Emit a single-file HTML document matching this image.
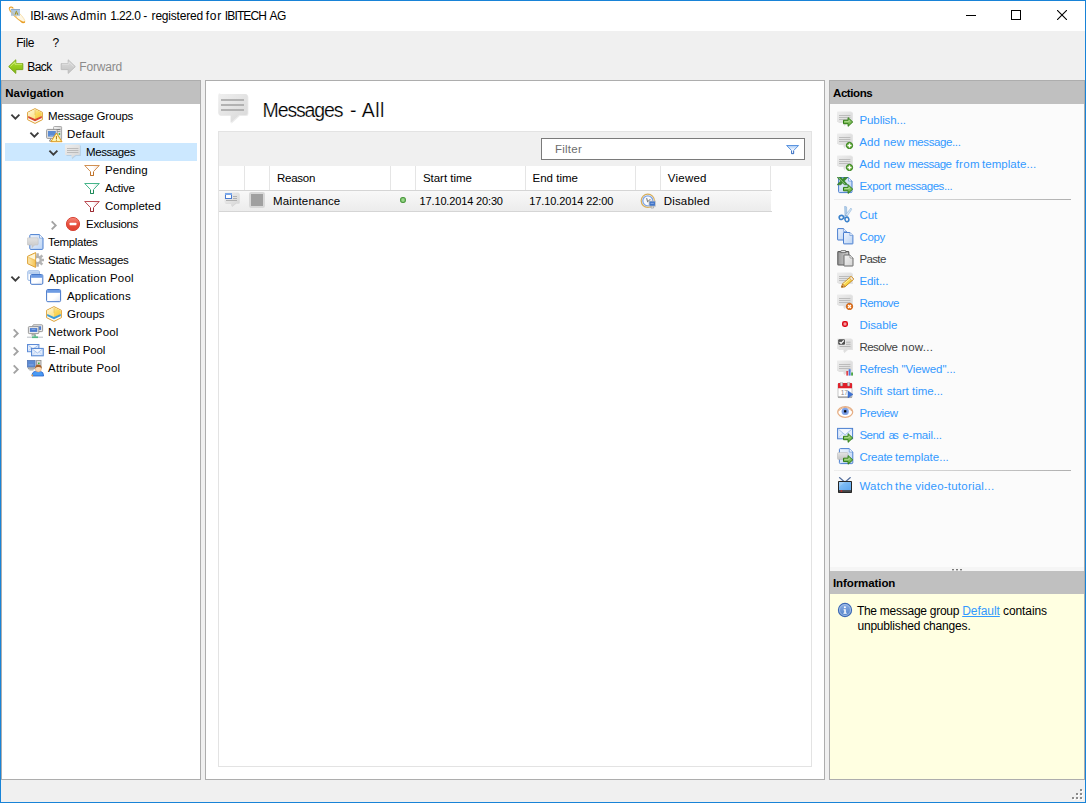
<!DOCTYPE html>
<html lang="en"><head><meta charset="utf-8"><title>IBI-aws Admin 1.22.0 - registered for IBITECH AG</title>
<style>
html,body{margin:0;padding:0}
body{width:1086px;height:803px;position:relative;overflow:hidden;background:#f0f0f0;font:11.5px/14px "Liberation Sans",sans-serif;color:#000}
div,svg,.g{position:absolute;box-sizing:border-box}
.g{left:0;top:0;width:0;height:0;display:block}
.t{white-space:pre;line-height:14px}
.ul{text-decoration:underline}
.big{-webkit-text-stroke:.22px #fff}
.win{left:0;top:0;width:1086px;height:803px;border:1px solid #1883d7}
.title{left:1px;top:1px;width:1084px;height:30px;background:#fff}
.panel{border:1px solid #adadad;background:#fff}
.hdr{background:#c0c0c0}
.sep{height:1px;background:linear-gradient(to right,#eeeeee,#b0b0b0)}
.vs{width:1px;background:#e5e5e5;top:166px;height:24px}
.i16{width:16px;height:16px}
</style></head>
<body>
<header class="g" id="titlebar">
<div class="title" style="left:1px;top:1px"></div>
<svg style="left:6px;top:5px" width="22" height="22" viewBox="0 0 22 22"><g transform="translate(11.1,9.8) rotate(43.5)"><ellipse rx="10.4" ry="2.7" fill="#fff7e4" stroke="#f6dca4" stroke-width=".8"/><path d="M-10.4,0 A10.4,2.7 0 0 0 10.4,0" fill="none" stroke="#ecae44" stroke-width="1"/><path d="M-10.3,.4 Q-10.6,-2.2 -7.4,-2.1 M10.3,-.4 Q10.6,2.4 7,2.2" fill="none" stroke="#e89c24" stroke-width="1.1"/></g><rect x="5" y="4" width="9" height="6.8" fill="#a8c2de" opacity=".9"/><rect x="5" y="4" width="9" height="1" fill="#86a4c8" opacity=".9"/><path d="M8.6,9.4 L10.2,5.6 L12.4,9.6 L11.2,9.8 L10.2,8 L9.6,9.8 Z" fill="#9c8a18"/><path d="M9.8,8.2 L10.2,7.2 L10.8,8.2 Z" fill="#f8f4d0"/><path d="M5.4,6.6 L10.6,11.8" stroke="#f0c060" stroke-width=".9" stroke-dasharray="1 .6" opacity=".95"/></svg>
<svg style="left:966px;top:15px" width="10" height="1" viewBox="0 0 10 1"><rect width="10" height="1" fill="#000"/></svg>
<svg style="left:1011px;top:10px" width="10" height="10" viewBox="0 0 10 10"><rect x=".5" y=".5" width="9" height="9" fill="none" stroke="#000" stroke-width="1"/></svg>
<svg style="left:1057px;top:10px" width="10" height="10" viewBox="0 0 10 10"><path d="M0,0 L10,10 M10,0 L0,10" stroke="#000" stroke-width="1.1"/></svg>
<div class="t" style="left:30.2px;top:9px;letter-spacing:-0.33px;font-size:12px;">IBI-aws</div>
<div class="t" style="left:70.8px;top:9px;letter-spacing:0.42px;font-size:12px;">Admin</div>
<div class="t" style="left:110.2px;top:9px;letter-spacing:-0.55px;font-size:12px;">1.22.0</div>
<div class="t" style="left:143.3px;top:9px;letter-spacing:0.86px;font-size:12px;">-</div>
<div class="t" style="left:151.6px;top:9px;letter-spacing:-0.21px;font-size:12px;">registered</div>
<div class="t" style="left:205.8px;top:9px;letter-spacing:0.71px;font-size:12px;">for</div>
<div class="t" style="left:224.8px;top:9px;letter-spacing:-0.86px;font-size:12px;">IBITECH</div>
<div class="t" style="left:269.4px;top:9px;letter-spacing:-0.46px;font-size:12px;">AG</div>
</header>
<nav class="g" id="menubar">
<div class="t" style="left:16.2px;top:36px;letter-spacing:-0.40px;font-size:12px;">File</div>
<div class="t" style="left:52.5px;top:36px;letter-spacing:-2.72px;font-size:12px;">?</div>
</nav>
<div class="g" id="toolbar">
<svg style="left:8px;top:59px" width="16" height="16" viewBox="0 0 16 16"><defs><linearGradient id="back-gbk" x1="0" y1="0" x2="0" y2="1"><stop offset="0" stop-color="#b3df3c"/><stop offset=".5" stop-color="#96cc1e"/><stop offset="1" stop-color="#7fb512"/></linearGradient></defs><path d="M.7,7.6 L7.8,.8 V4.6 H14.8 V10.6 H7.8 V14.4 Z" fill="url(#back-gbk)" stroke="#7aa81a" stroke-width="1" stroke-linejoin="round"/><path d="M2.4,7.4 L7,2.9 V5.2 H14" fill="none" stroke="#d4f07a" stroke-width="1" opacity=".9"/></svg>
<svg style="left:60px;top:59px" width="16" height="16" viewBox="0 0 16 16"><defs><linearGradient id="fwd-gfw" x1="0" y1="0" x2="0" y2="1"><stop offset="0" stop-color="#dcdcdc"/><stop offset="1" stop-color="#c2c2c2"/></linearGradient></defs><path d="M15.3,7.6 L8.2,.8 V4.6 H1.2 V10.6 H8.2 V14.4 Z" fill="url(#fwd-gfw)" stroke="#bdbdbd" stroke-width="1" stroke-linejoin="round"/><path d="M2,5.2 H9 V2.9 L13.6,7.4" fill="none" stroke="#e2e2e2" stroke-width="1" opacity=".9"/></svg>
<div class="t" style="left:27.2px;top:60px;letter-spacing:-0.54px;font-size:12px;">Back</div>
<div class="t" style="left:79.3px;top:60px;letter-spacing:-0.18px;font-size:12px;color:#8b8b8b;">Forward</div>
</div>
<nav class="g" id="navigation">
<div class="panel" style="left:1px;top:80px;width:200px;height:700px"></div>
<div class="hdr" style="left:2px;top:81px;width:198px;height:23px"></div>
<div style="left:5px;top:143px;width:192px;height:18px;background:#cce8ff"></div>
<svg style="left:27px;top:108px" width="16" height="16" viewBox="0 0 16 16"><defs><linearGradient id="boxred-gy" x1="0" y1="0" x2="1" y2="1"><stop offset="0" stop-color="#fdf3cf"/><stop offset=".55" stop-color="#f9d95e"/><stop offset="1" stop-color="#f4c238"/></linearGradient></defs><path d="M8,.6 L15.4,4.3 V11.7 L8,15.4 L.6,11.7 V4.3 Z" fill="#fffaf0" stroke="#dca23a" stroke-width="1" stroke-linejoin="round"/><path d="M8,1.3 L14.8,4.7 V8.2 L8,11.4 L1.2,8.2 V4.7 Z" fill="url(#boxred-gy)"/><path d="M8,1.3 L1.2,4.7 V8.2 L8,11.4 Z" fill="#fff" opacity=".35"/><path d="M1.2,7.9 L8,11 L14.8,7.9 V10.1 L8,13.2 L1.2,10.1 Z" fill="#d8452f"/><path d="M8,1.5 V7" stroke="#e7b552" stroke-width=".7" opacity=".8"/></svg>
<svg style="left:10px;top:113px" width="11" height="8" viewBox="0 0 11 8"><path d="M1.4,1.7 L5.4,5.6 L9.4,1.7" fill="none" stroke="#3c3c3c" stroke-width="1.85"/></svg>
<svg style="left:46px;top:126px" width="17" height="17" viewBox="0 0 17 17"><defs><linearGradient id="default-gt" x1="0" y1="0" x2="1" y2="0"><stop offset="0" stop-color="#fafafa"/><stop offset="1" stop-color="#d2d2d2"/></linearGradient></defs><rect x="7.6" y=".5" width="8" height="13.4" rx=".8" fill="url(#default-gt)" stroke="#a2a2a2" stroke-width=".9"/><rect x="10" y="3" width="4.4" height=".9" fill="#777"/><rect x="10" y="5" width="4.4" height=".9" fill="#999"/><circle cx="13.4" cy="8" r=".9" fill="#3cae3c"/><rect x=".6" y="3.4" width="10.6" height="9" rx=".9" fill="#e4e4e4" stroke="#8e8e8e" stroke-width=".9"/><rect x="2" y="5" width="7.8" height="5.6" fill="#5b8bd2"/><rect x="3.8" y="9" width="3.6" height=".7" fill="#86aee6"/><path d="M4.5,12.6 v1.6 h-1 v1 h4" fill="none" stroke="#8e8e8e" stroke-width=".9"/><path d="M10.4,7 L16,15.7 H4.8 Z" fill="#fdec7c" stroke="#dc9a28" stroke-width="1" stroke-linejoin="round"/><path d="M10.4,8.6 L14.2,14.7 H6.6 Z" fill="#fffbd8" opacity=".75"/><rect x="9.9" y="10" width="1.1" height="3" fill="#b8801c"/><rect x="9.9" y="13.6" width="1.1" height="1.1" fill="#b8801c"/></svg>
<svg style="left:29px;top:131px" width="11" height="8" viewBox="0 0 11 8"><path d="M1.4,1.7 L5.4,5.6 L9.4,1.7" fill="none" stroke="#3c3c3c" stroke-width="1.85"/></svg>
<svg style="left:65px;top:144px" width="16" height="16" viewBox="0 0 16 16"><defs><linearGradient id="msgs-gb" x1="0" y1="0" x2="1" y2="1"><stop offset="0" stop-color="#eeeeee"/><stop offset="1" stop-color="#d6d6d6"/></linearGradient></defs><g opacity="1"><path d="M1.5,1.5 h14.4 v10.5 h-4.9 l-4,3.2 v-3.2 h-5.5 z" fill="#000" opacity=".10"/><path d="M1.7,0.5 h12.0 a1.2,1.2 0 0 1 1.2,1.2 v8.1 a1.2,1.2 0 0 1 -1.2,1.2 h-3.200000000000001 l-4,3 v-3 h-5.6 a1.2,1.2 0 0 1 -1.2,-1.2 v-8.1 a1.2,1.2 0 0 1 1.2,-1.2 z" fill="url(#msgs-gb)"/><rect x="2.0" y="4.0" width="11.4" height="1" fill="#bcbcbc"/><rect x="2.0" y="6.0" width="11.4" height="1" fill="#bcbcbc"/><rect x="2.0" y="8.0" width="11.4" height="1" fill="#bcbcbc"/></g></svg>
<svg style="left:48px;top:149px" width="11" height="8" viewBox="0 0 11 8"><path d="M1.4,1.7 L5.4,5.6 L9.4,1.7" fill="none" stroke="#3c3c3c" stroke-width="1.85"/></svg>
<svg style="left:84px;top:162px" width="16" height="16" viewBox="0 0 16 16"><defs><linearGradient id="fpending-gf" x1="0" y1="0" x2="1" y2="0"><stop offset="0" stop-color="#fff"/><stop offset=".55" stop-color="#fff"/><stop offset="1" stop-color="#f1ddd4"/></linearGradient></defs><path d="M.7,3.5 H15.3 L9.5,9.6 V13.5 H6.5 V9.6 Z" fill="url(#fpending-gf)" stroke="#cf8a4a" stroke-width=".95" stroke-linejoin="miter"/><path d="M6.5,10 V13.5 H9.5 V10" fill="none" stroke="#bf7228" stroke-width=".95"/></svg>
<svg style="left:84px;top:180px" width="16" height="16" viewBox="0 0 16 16"><defs><linearGradient id="factive-gf" x1="0" y1="0" x2="1" y2="0"><stop offset="0" stop-color="#fff"/><stop offset=".55" stop-color="#fff"/><stop offset="1" stop-color="#cfe9dc"/></linearGradient></defs><path d="M.7,3.5 H15.3 L9.5,9.6 V13.5 H6.5 V9.6 Z" fill="url(#factive-gf)" stroke="#3cb184" stroke-width=".95" stroke-linejoin="miter"/><path d="M6.5,10 V13.5 H9.5 V10" fill="none" stroke="#1f8756" stroke-width=".95"/></svg>
<svg style="left:84px;top:198px" width="16" height="16" viewBox="0 0 16 16"><defs><linearGradient id="fdone-gf" x1="0" y1="0" x2="1" y2="0"><stop offset="0" stop-color="#fff"/><stop offset=".55" stop-color="#fff"/><stop offset="1" stop-color="#ecd0d2"/></linearGradient></defs><path d="M.7,3.5 H15.3 L9.5,9.6 V13.5 H6.5 V9.6 Z" fill="url(#fdone-gf)" stroke="#b8444c" stroke-width=".95" stroke-linejoin="miter"/><path d="M6.5,10 V13.5 H9.5 V10" fill="none" stroke="#982830" stroke-width=".95"/></svg>
<svg style="left:65px;top:216px" width="16" height="16" viewBox="0 0 16 16"><defs><linearGradient id="excl-gr" x1="0" y1="0" x2="0" y2="1"><stop offset="0" stop-color="#f58a7c"/><stop offset=".5" stop-color="#e9503e"/><stop offset="1" stop-color="#e0402e"/></linearGradient></defs><circle cx="8" cy="8" r="6.6" fill="url(#excl-gr)" stroke="#d8483a" stroke-width="1"/><rect x="4.6" y="6.8" width="6.8" height="2.5" rx=".5" fill="#fff"/></svg>
<svg style="left:50px;top:220px" width="8" height="11" viewBox="0 0 8 11"><path d="M1.7,1.4 L5.7,5.4 L1.7,9.4" fill="none" stroke="#a3a3a3" stroke-width="1.9"/></svg>
<svg style="left:27px;top:234px" width="17" height="16" viewBox="0 0 17 16"><defs><linearGradient id="templates-gp" x1="0" y1="0" x2="1" y2="1"><stop offset="0" stop-color="#eef4fd"/><stop offset="1" stop-color="#bcd4f4"/></linearGradient><linearGradient id="templates-gg" x1="0" y1="0" x2="0" y2="1"><stop offset="0" stop-color="#e2e2e2"/><stop offset="1" stop-color="#c6c6c6"/></linearGradient></defs><path d="M3.8,0.6 H12.5 L16.0,4.1 V14.4 a1,1 0 0 1 -1,1 H3.8 a1,1 0 0 1 -1,-1 V1.6 a1,1 0 0 1 1,-1 z" fill="url(#templates-gp)" stroke="#4a7fd0" stroke-width="1" stroke-linejoin="round"/><path d="M12.5,0.6 V4.1 H16.0" fill="#fff" stroke="#4a7fd0" stroke-width=".7" opacity=".8"/><path d="M1.2,3.8 h9 a1,1 0 0 1 1,1 v5.2 a1,1 0 0 1 -1,1 h-2.6 l-2.6,2.7 v-2.7 h-3.8 a1,1 0 0 1 -1,-1 v-5.2 a1,1 0 0 1 1,-1 z" fill="url(#templates-gg)" stroke="#bdbdbd" stroke-width=".5"/></svg>
<svg style="left:27px;top:252px" width="17" height="16" viewBox="0 0 17 16"><defs><linearGradient id="static-gy2" x1="0" y1="0" x2="1" y2="0"><stop offset="0" stop-color="#fde9b0"/><stop offset="1" stop-color="#f5c350"/></linearGradient></defs><g transform="translate(10.6,8)" fill="#b3b3b3"><circle r="4.4"/><rect x="-1.25" y="-6.7" width="2.5" height="3" transform="rotate(0)"/><rect x="-1.25" y="-6.7" width="2.5" height="3" transform="rotate(45)"/><rect x="-1.25" y="-6.7" width="2.5" height="3" transform="rotate(90)"/><rect x="-1.25" y="-6.7" width="2.5" height="3" transform="rotate(135)"/><rect x="-1.25" y="-6.7" width="2.5" height="3" transform="rotate(180)"/><rect x="-1.25" y="-6.7" width="2.5" height="3" transform="rotate(225)"/><rect x="-1.25" y="-6.7" width="2.5" height="3" transform="rotate(270)"/><rect x="-1.25" y="-6.7" width="2.5" height="3" transform="rotate(315)"/><circle r="2" fill="#fbfbfb"/></g><path d="M8.6,.6 L.6,4.3 V11.7 L8.6,15.4 Z" fill="url(#static-gy2)" stroke="#dca23a" stroke-width="1" stroke-linejoin="round"/><path d="M8.2,1.5 L1.4,4.7 L8.2,7.8 Z" fill="#fff6d8"/><path d="M1.4,5.4 L8.2,8.6" stroke="#e9b95c" stroke-width=".6"/></svg>
<svg style="left:27px;top:270px" width="17" height="16" viewBox="0 0 17 16"><defs><linearGradient id="apppool-gw" x1="0" y1="0" x2="1" y2="1"><stop offset="0" stop-color="#fff"/><stop offset=".6" stop-color="#fff"/><stop offset="1" stop-color="#dfe6f4"/></linearGradient></defs><g opacity="1"><rect x="0.8" y="0.8" width="11.6" height="9.6" rx="1.2" fill="url(#apppool-gw)" stroke="#94b5e4" stroke-width="1"/><rect x="1.3" y="1.3" width="10.6" height="2.8" fill="#b7cfef"/></g><g opacity="1"><rect x="3.6" y="4.5" width="12.2" height="9.8" rx="1.2" fill="url(#apppool-gw)" stroke="#4577c9" stroke-width="1"/><rect x="4.1" y="5.0" width="11.2" height="2.8" fill="#6d9be3"/></g></svg>
<svg style="left:10px;top:275px" width="11" height="8" viewBox="0 0 11 8"><path d="M1.4,1.7 L5.4,5.6 L9.4,1.7" fill="none" stroke="#3c3c3c" stroke-width="1.85"/></svg>
<svg style="left:46px;top:288px" width="16" height="16" viewBox="0 0 16 16"><defs><linearGradient id="apps-gw" x1="0" y1="0" x2="1" y2="1"><stop offset="0" stop-color="#fff"/><stop offset=".6" stop-color="#fff"/><stop offset="1" stop-color="#dfe6f4"/></linearGradient></defs><g opacity="1"><rect x="0.6" y="1.5" width="14" height="12.2" rx="1.2" fill="url(#apps-gw)" stroke="#4577c9" stroke-width="1"/><rect x="1.1" y="2.0" width="13" height="2.8" fill="#6d9be3"/></g></svg>
<svg style="left:46px;top:306px" width="16" height="16" viewBox="0 0 16 16"><defs><linearGradient id="boxblue-gy" x1="0" y1="0" x2="1" y2="1"><stop offset="0" stop-color="#fdf3cf"/><stop offset=".55" stop-color="#f9d95e"/><stop offset="1" stop-color="#f4c238"/></linearGradient></defs><path d="M8,.6 L15.4,4.3 V11.7 L8,15.4 L.6,11.7 V4.3 Z" fill="#fffaf0" stroke="#dca23a" stroke-width="1" stroke-linejoin="round"/><path d="M8,1.3 L14.8,4.7 V8.2 L8,11.4 L1.2,8.2 V4.7 Z" fill="url(#boxblue-gy)"/><path d="M8,1.3 L1.2,4.7 V8.2 L8,11.4 Z" fill="#fff" opacity=".35"/><path d="M1.2,7.9 L8,11 L14.8,7.9 V10.1 L8,13.2 L1.2,10.1 Z" fill="#3b9bd6"/><path d="M8,1.5 V7" stroke="#e7b552" stroke-width=".7" opacity=".8"/></svg>
<svg style="left:27px;top:324px" width="17" height="16" viewBox="0 0 17 16"><rect x="5.8" y="0.8" width="9.8" height="6.8" rx=".8" fill="#ececec" stroke="#8f8f8f" stroke-width=".9"/><rect x="7.3" y="2.3" width="6.800000000000001" height="3.5999999999999996" fill="#4b7bd0"/><rect x="1.4" y="2.6" width="10.4" height="7" rx=".8" fill="#ececec" stroke="#8f8f8f" stroke-width=".9"/><rect x="2.9" y="4.1" width="7.4" height="3.8" fill="#4b7bd0"/><rect x="4.6" y="4.9" width="4" height="1" fill="#86aae6"/><path d="M5.6,9.8 l-1,1.4 h4 l-1,-1.4" fill="#b8b8b8" stroke="#8f8f8f" stroke-width=".6"/><rect x="0" y="12.6" width="16" height="1.3" fill="#c9ced3"/><rect x="5" y="12.4" width="6" height="1.7" fill="#57b884"/><rect x="7.4" y="10.8" width="1.3" height="2" fill="#57b884"/></svg>
<svg style="left:12px;top:328px" width="8" height="11" viewBox="0 0 8 11"><path d="M1.7,1.4 L5.7,5.4 L1.7,9.4" fill="none" stroke="#a3a3a3" stroke-width="1.9"/></svg>
<svg style="left:27px;top:342px" width="17" height="16" viewBox="0 0 17 16"><g opacity="1"><rect x="0.5" y="2.5" width="11.4" height="7.2" fill="#e3edfc" stroke="#5d8bd6" stroke-width="1"/><path d="M1.3,3.3 L6.2,6.964 L11.1,3.3" fill="#f4f8ff" stroke="#9fbdea" stroke-width=".9"/><path d="M1.3,8.899999999999999 L4.604,5.74 M11.1,8.899999999999999 L7.796,5.74" stroke="#b7cdf0" stroke-width=".8"/></g><g opacity="1"><rect x="4.6" y="6.4" width="11.6" height="7.4" fill="#e3edfc" stroke="#4a7fd0" stroke-width="1"/><path d="M5.3999999999999995,7.2 L10.399999999999999,10.988 L15.399999999999999,7.2" fill="#f4f8ff" stroke="#9fbdea" stroke-width=".9"/><path d="M5.3999999999999995,13.0 L8.776,9.73 M15.399999999999999,13.0 L12.024,9.73" stroke="#b7cdf0" stroke-width=".8"/></g></svg>
<svg style="left:12px;top:346px" width="8" height="11" viewBox="0 0 8 11"><path d="M1.7,1.4 L5.7,5.4 L1.7,9.4" fill="none" stroke="#a3a3a3" stroke-width="1.9"/></svg>
<svg style="left:27px;top:360px" width="17" height="17" viewBox="0 0 17 17"><rect x="9.6" y=".4" width="4.4" height="8" fill="#d8d8d8" stroke="#8a8a8a" stroke-width=".8"/><rect x="11" y="2.6" width="1.6" height="1.4" fill="#3cae3c"/><rect x=".5" y=".5" width="7.6" height="6.6" fill="#5c8ad3" stroke="#5476b4" stroke-width=".8"/><rect x="1.6" y="4.5" width="5" height=".8" fill="#8cb0ea"/><path d="M1.4,7.8 h6 v1.2 h-6 z M2.4,10 h4" fill="#cfcfcf" stroke="#8a8a8a" stroke-width=".7"/><path d="M5,16 q0,-4.4 3.6,-4.6 h5 q3,.4 3,4.6 z" fill="#4a9af4" stroke="#2a62c8" stroke-width=".8"/><rect x="4.6" y="14.6" width="1.4" height="1.6" fill="#f0a040"/><circle cx="11.3" cy="8.8" r="3.1" fill="#fbd9b5" stroke="#d8a06c" stroke-width=".5"/><path d="M8,8.4 q.2,-4 3.4,-4 q3.2,0 3.4,4 q-1.6,-1.6 -3.4,-1.4 q-1.8,-.2 -3.4,1.4 z" fill="#a5602a"/></svg>
<svg style="left:12px;top:364px" width="8" height="11" viewBox="0 0 8 11"><path d="M1.7,1.4 L5.7,5.4 L1.7,9.4" fill="none" stroke="#a3a3a3" stroke-width="1.9"/></svg>
<div class="t" style="left:5.3px;top:86px;letter-spacing:-0.04px;font-weight:bold;">Navigation</div>
<div class="t" style="left:48.0px;top:109px;letter-spacing:-0.17px;">Message Groups</div>
<div class="t" style="left:67.0px;top:127px;letter-spacing:0.16px;">Default</div>
<div class="t" style="left:86.0px;top:145px;letter-spacing:-0.41px;">Messages</div>
<div class="t" style="left:105.0px;top:163px;letter-spacing:0.07px;">Pending</div>
<div class="t" style="left:105.0px;top:181px;letter-spacing:-0.29px;">Active</div>
<div class="t" style="left:105.0px;top:199px;letter-spacing:0.03px;">Completed</div>
<div class="t" style="left:86.0px;top:217px;letter-spacing:-0.29px;">Exclusions</div>
<div class="t" style="left:48.0px;top:235px;letter-spacing:-0.32px;">Templates</div>
<div class="t" style="left:48.0px;top:253px;letter-spacing:-0.25px;">Static Messages</div>
<div class="t" style="left:48.0px;top:271px;letter-spacing:0.21px;">Application Pool</div>
<div class="t" style="left:67.0px;top:289px;letter-spacing:0.15px;">Applications</div>
<div class="t" style="left:67.0px;top:307px;letter-spacing:-0.02px;">Groups</div>
<div class="t" style="left:48.0px;top:325px;letter-spacing:0.18px;">Network Pool</div>
<div class="t" style="left:48.0px;top:343px;letter-spacing:-0.14px;">E-mail Pool</div>
<div class="t" style="left:48.0px;top:361px;letter-spacing:0.24px;">Attribute Pool</div>
</nav>
<main class="g" id="content">
<div class="panel" style="left:205px;top:80px;width:620px;height:700px"></div>
<div style="left:218px;top:131px;width:594px;height:636px;border:1px solid #e3e3e3;background:#fff"></div>
<div style="left:219px;top:132px;width:592px;height:34px;background:#f0f0f0"></div>
<div style="left:541px;top:138px;width:264px;height:22px;border:1px solid #7a7a7a;background:#fff"></div>
<div class="vs" style="left:244px;top:166px"></div>
<div class="vs" style="left:269px;top:166px"></div>
<div class="vs" style="left:390px;top:166px"></div>
<div class="vs" style="left:415px;top:166px"></div>
<div class="vs" style="left:525px;top:166px"></div>
<div class="vs" style="left:635px;top:166px"></div>
<div class="vs" style="left:660px;top:166px"></div>
<div class="vs" style="left:770px;top:166px"></div>
<div style="left:219px;top:190px;width:553px;height:1px;background:#d5d5d5"></div>
<div style="left:219px;top:191px;width:552px;height:20px;background:linear-gradient(#f8f8f8,#ececec)"></div>
<div style="left:219px;top:211px;width:553px;height:1px;background:#d5d5d5"></div>
<svg style="left:217px;top:91px" width="34" height="34" viewBox="0 0 34 34"><defs><linearGradient id="bigmsg-gbb" x1="0" y1="0" x2="1" y2="1"><stop offset="0" stop-color="#efefef"/><stop offset="1" stop-color="#d8d8d8"/></linearGradient></defs><path d="M3.2,3 h25.4 a2,2 0 0 1 2,2 v17 a2,2 0 0 1 -2,2 h-6.6 l-8.4,7.8 v-7.8 h-10.4 a2,2 0 0 1 -2,-2 v-17.6 a2,2 0 0 1 2,-2 z" fill="#000" opacity=".08" transform="translate(.8,.9)"/><path d="M3.2,3 h25.4 a2,2 0 0 1 2,2 v17 a2,2 0 0 1 -2,2 h-6.6 l-8.4,7.8 v-7.8 h-10.4 a2,2 0 0 1 -2,-2 v-17.6 a2,2 0 0 1 2,-2 z" fill="url(#bigmsg-gbb)" transform="translate(0,-.1)"/><rect x="4" y="8" width="23" height="2" fill="#b2b2b2"/><rect x="4" y="13" width="23" height="2" fill="#b2b2b2"/><rect x="4" y="18" width="23" height="2" fill="#b2b2b2"/></svg>
<svg style="left:786px;top:145px" width="14" height="10" viewBox="0 0 14 10"><defs><linearGradient id="ffilter-gff" x1="0" y1="0" x2="0" y2="1"><stop offset="0" stop-color="#a8caf4"/><stop offset=".5" stop-color="#f0f6ff"/><stop offset="1" stop-color="#fff"/></linearGradient></defs><path d="M.6,.5 H12.6 L7.6,5.6 V8.6 H5.6 V5.6 Z" fill="url(#ffilter-gff)" stroke="#4685da" stroke-width=".85" stroke-linejoin="miter"/><path d="M5.6,6 V8.6 H7.6 V6" fill="#fff" stroke="#2c62b8" stroke-width=".85"/></svg>
<svg style="left:224px;top:192px" width="17" height="16" viewBox="0 0 17 16"><defs><linearGradient id="rowmsg-gb" x1="0" y1="0" x2="1" y2="1"><stop offset="0" stop-color="#eeeeee"/><stop offset="1" stop-color="#d6d6d6"/></linearGradient></defs><path d="M1.5,.6 h12.5 a1,1 0 0 1 1,1 v8.4 a1,1 0 0 1 -1,1 h-2.5 l-4,3.4 l-1,-3.4 h-5 a1,1 0 0 1 -1,-1 v-8.4 a1,1 0 0 1 1,-1 z" fill="#000" opacity=".10" transform="translate(.7,.7)"/><path d="M1.5,.6 h12.5 a1,1 0 0 1 1,1 v8.4 a1,1 0 0 1 -1,1 h-2.5 l-4,3.4 l-1,-3.4 h-5 a1,1 0 0 1 -1,-1 v-8.4 a1,1 0 0 1 1,-1 z" fill="url(#rowmsg-gb)"/><rect x="9" y="4" width="4" height="1" fill="#b0b0b0"/><rect x="9" y="6" width="4" height="1" fill="#b0b0b0"/><rect x="2" y="8" width="11" height="1" fill="#b0b0b0"/><rect x="1" y="1" width="7" height="6" fill="#4a7bd0"/><rect x="1" y="1" width="7" height="2" fill="#7aa7ea"/><rect x="2" y="3" width="5" height="3" fill="#fff"/></svg>
<svg style="left:249px;top:192px" width="16" height="16" viewBox="0 0 16 16"><rect x="0" y="0" width="16" height="16" rx="2.2" fill="#d8d8d8"/><rect x="2" y="2" width="12" height="12" fill="#a0a0a0"/></svg>
<svg style="left:399px;top:196px" width="8" height="8" viewBox="0 0 8 8"><rect x="1.7" y="1.7" width="4.6" height="4.6" rx="1.6" fill="#9ad88a" stroke="#4d9a40" stroke-width="1.3"/></svg>
<svg style="left:640px;top:192.5px" width="17" height="17" viewBox="0 0 17 17"><circle cx="7.8" cy="7.8" r="6.6" fill="#fff" stroke="#d6ad5a" stroke-width="1.2"/><circle cx="7.8" cy="7.8" r="5" fill="#f7faff" stroke="#7ea4e4" stroke-width="1.3"/><path d="M6.6,5.2 L7.6,8.6 L10.4,6.4" fill="none" stroke="#7a7a7a" stroke-width="1.1"/><rect x="9" y="8" width="6.4" height="5.2" fill="#3f74c8" stroke="#c9c9c9" stroke-width=".9"/><rect x="10.6" y="9.8" width="3.2" height="1.2" fill="#7da2e2"/><path d="M11,13.4 v1.6 h2.6 v-1.6" fill="none" stroke="#9a9a9a" stroke-width=".7"/></svg>
<div class="t big" style="left:262.6px;top:99px;letter-spacing:-1.14px;font-size:19.5px;line-height:23px;">Messages</div>
<div class="t big" style="left:350.1px;top:99px;letter-spacing:1.74px;font-size:19.5px;line-height:23px;">-</div>
<div class="t big" style="left:361.8px;top:99px;letter-spacing:0.38px;font-size:19.5px;line-height:23px;">All</div>
<div class="t" style="left:555.0px;top:142px;letter-spacing:0.23px;color:#6d6d6d;">Filter</div>
<div class="t" style="left:276.9px;top:171px;letter-spacing:-0.23px;">Reason</div>
<div class="t" style="left:422.9px;top:171px;letter-spacing:-0.02px;">Start time</div>
<div class="t" style="left:532.5px;top:171px;letter-spacing:0.01px;">End time</div>
<div class="t" style="left:667.8px;top:171px;letter-spacing:0.24px;">Viewed</div>
<div class="t" style="left:273.1px;top:194px;letter-spacing:0.13px;">Maintenance</div>
<div class="t" style="left:419.6px;top:194px;letter-spacing:-0.15px;font-size:11px;">17.10.2014 20:30</div>
<div class="t" style="left:529.2px;top:194px;letter-spacing:-0.10px;font-size:11px;">17.10.2014 22:00</div>
<div class="t" style="left:663.8px;top:194px;letter-spacing:0.15px;">Disabled</div>
</main>
<aside class="g" id="actions">
<div class="panel" style="left:829px;top:80px;width:256px;height:700px;background:#fbfbfb"></div>
<div class="hdr" style="left:830px;top:81px;width:254px;height:23px"></div>
<div class="sep" style="left:834px;top:199px;width:237px"></div>
<div class="sep" style="left:834px;top:470px;width:237px"></div>
<svg style="left:837px;top:111px" width="17" height="16" viewBox="0 0 17 16"><defs><linearGradient id="publish-gb" x1="0" y1="0" x2="1" y2="1"><stop offset="0" stop-color="#eeeeee"/><stop offset="1" stop-color="#d6d6d6"/></linearGradient><linearGradient id="publish-ga" x1="0" y1="0" x2="0" y2="1"><stop offset="0" stop-color="#a2d482"/><stop offset="1" stop-color="#62a83a"/></linearGradient></defs><g opacity="1"><path d="M1.5,1.5 h14.4 v10.5 h-4.9 l-4,3.2 v-3.2 h-5.5 z" fill="#000" opacity=".10"/><path d="M1.7,0.5 h12.0 a1.2,1.2 0 0 1 1.2,1.2 v8.1 a1.2,1.2 0 0 1 -1.2,1.2 h-3.200000000000001 l-4,3 v-3 h-5.6 a1.2,1.2 0 0 1 -1.2,-1.2 v-8.1 a1.2,1.2 0 0 1 1.2,-1.2 z" fill="url(#publish-gb)"/><rect x="2.0" y="4.0" width="11.4" height="1" fill="#bcbcbc"/><rect x="2.0" y="6.0" width="11.4" height="1" fill="#bcbcbc"/><rect x="2.0" y="8.0" width="11.4" height="1" fill="#bcbcbc"/></g><path d="M6.5,9.3 h4.6 v-2.6 l4.6,4.3 l-4.6,4.3 v-2.6 h-4.6 z" fill="url(#publish-ga)" stroke="#2e7d12" stroke-width="1" stroke-linejoin="round"/><path d="M7.6,10.4 h4.6 v-1.3" fill="none" stroke="#b9e39a" stroke-width=".8" opacity=".9"/></svg>
<svg style="left:837px;top:133px" width="17" height="16" viewBox="0 0 17 16"><defs><linearGradient id="addmsg-gb" x1="0" y1="0" x2="1" y2="1"><stop offset="0" stop-color="#eeeeee"/><stop offset="1" stop-color="#d6d6d6"/></linearGradient></defs><g opacity="1"><path d="M1.5,1.5 h14.4 v10.5 h-4.9 l-4,3.2 v-3.2 h-5.5 z" fill="#000" opacity=".10"/><path d="M1.7,0.5 h12.0 a1.2,1.2 0 0 1 1.2,1.2 v8.1 a1.2,1.2 0 0 1 -1.2,1.2 h-3.200000000000001 l-4,3 v-3 h-5.6 a1.2,1.2 0 0 1 -1.2,-1.2 v-8.1 a1.2,1.2 0 0 1 1.2,-1.2 z" fill="url(#addmsg-gb)"/><rect x="2.0" y="4.0" width="11.4" height="1" fill="#bcbcbc"/><rect x="2.0" y="6.0" width="11.4" height="1" fill="#bcbcbc"/><rect x="2.0" y="8.0" width="11.4" height="1" fill="#bcbcbc"/></g><circle cx="12.5" cy="12.5" r="3.1" fill="#6bb03c" stroke="#2a7a12" stroke-width="1"/><path d="M10.5,12.5 h4 M12.5,10.5 v4" stroke="#fff" stroke-width="1.3"/></svg>
<svg style="left:837px;top:155px" width="17" height="16" viewBox="0 0 17 16"><defs><linearGradient id="addmsg-gb" x1="0" y1="0" x2="1" y2="1"><stop offset="0" stop-color="#eeeeee"/><stop offset="1" stop-color="#d6d6d6"/></linearGradient></defs><g opacity="1"><path d="M1.5,1.5 h14.4 v10.5 h-4.9 l-4,3.2 v-3.2 h-5.5 z" fill="#000" opacity=".10"/><path d="M1.7,0.5 h12.0 a1.2,1.2 0 0 1 1.2,1.2 v8.1 a1.2,1.2 0 0 1 -1.2,1.2 h-3.200000000000001 l-4,3 v-3 h-5.6 a1.2,1.2 0 0 1 -1.2,-1.2 v-8.1 a1.2,1.2 0 0 1 1.2,-1.2 z" fill="url(#addmsg-gb)"/><rect x="2.0" y="4.0" width="11.4" height="1" fill="#bcbcbc"/><rect x="2.0" y="6.0" width="11.4" height="1" fill="#bcbcbc"/><rect x="2.0" y="8.0" width="11.4" height="1" fill="#bcbcbc"/></g><circle cx="12.5" cy="12.5" r="3.1" fill="#6bb03c" stroke="#2a7a12" stroke-width="1"/><path d="M10.5,12.5 h4 M12.5,10.5 v4" stroke="#fff" stroke-width="1.3"/></svg>
<svg style="left:837px;top:177px" width="17" height="17" viewBox="0 0 17 17"><defs><linearGradient id="export-gp" x1="0" y1="0" x2="1" y2="1"><stop offset="0" stop-color="#eef4fd"/><stop offset="1" stop-color="#bcd4f4"/></linearGradient><linearGradient id="export-ga" x1="0" y1="0" x2="0" y2="1"><stop offset="0" stop-color="#a2d482"/><stop offset="1" stop-color="#62a83a"/></linearGradient></defs><path d="M2.6,0.6 H11.5 L15.0,4.1 V14.6 a1,1 0 0 1 -1,1 H2.6 a1,1 0 0 1 -1,-1 V1.6 a1,1 0 0 1 1,-1 z" fill="url(#export-gp)" stroke="#4a7fd0" stroke-width="1" stroke-linejoin="round"/><path d="M11.5,0.6 V4.1 H15.0" fill="#fff" stroke="#4a7fd0" stroke-width=".7" opacity=".8"/><path d="M0,.2 h4 l1.6,2 l1.6,-2 h3.6 l-3.4,3.8 l3.4,3.8 h-3.6 l-1.6,-2 l-1.6,2 h-4 l3.6,-3.8 z" fill="#3c8c2e" stroke="#2a6e1e" stroke-width=".5"/><path d="M1.6,.8 l6.4,6.4" stroke="#a9d49a" stroke-width=".8"/><path d="M6.5,10.399999999999999 h4.6 v-2.6 l4.6,4.3 l-4.6,4.3 v-2.6 h-4.6 z" fill="url(#export-ga)" stroke="#2e7d12" stroke-width="1" stroke-linejoin="round"/><path d="M7.6,11.5 h4.6 v-1.3" fill="none" stroke="#b9e39a" stroke-width=".8" opacity=".9"/></svg>
<svg style="left:837px;top:206px" width="16" height="17" viewBox="0 0 16 17"><path d="M7.6,.3 L9.6,.9 L10,12 L8,11 Z" fill="#b4d0ea" stroke="#7aa6d4" stroke-width=".5"/><path d="M14,2 L14.6,3.6 L8.6,12.4 L6.8,11 Z" fill="#d6e6f4" stroke="#7aa6d4" stroke-width=".5"/><circle cx="9" cy="9.6" r=".6" fill="#4a78b0"/><ellipse cx="4.4" cy="11.4" rx="2.2" ry="2" fill="none" stroke="#3b82cc" stroke-width="1.6" transform="rotate(-20 4.4 11.4)"/><ellipse cx="9.9" cy="13.4" rx="1.9" ry="2.3" fill="none" stroke="#3b82cc" stroke-width="1.6" transform="rotate(-15 9.9 13.4)"/></svg>
<svg style="left:837px;top:228px" width="17" height="17" viewBox="0 0 17 17"><defs><linearGradient id="copy-gp" x1="0" y1="0" x2="1" y2="1"><stop offset="0" stop-color="#eef4fd"/><stop offset="1" stop-color="#bcd4f4"/></linearGradient></defs><path d="M0.8999999999999999,0.6 H6.6 L9.6,3.6 V11.7 a0.3,0.3 0 0 1 -0.3,0.3 H0.8999999999999999 a0.3,0.3 0 0 1 -0.3,-0.3 V0.8999999999999999 a0.3,0.3 0 0 1 0.3,-0.3 z" fill="url(#copy-gp)" stroke="#4a7fd0" stroke-width="1" stroke-linejoin="round"/><path d="M6.6,0.6 V3.6 H9.6" fill="#fff" stroke="#4a7fd0" stroke-width=".7" opacity=".8"/><path d="M6.8,4.5 H12.9 L15.9,7.5 V15.6 a0.3,0.3 0 0 1 -0.3,0.3 H6.8 a0.3,0.3 0 0 1 -0.3,-0.3 V4.8 a0.3,0.3 0 0 1 0.3,-0.3 z" fill="url(#copy-gp)" stroke="#4a7fd0" stroke-width="1" stroke-linejoin="round"/><path d="M12.9,4.5 V7.5 H15.9" fill="#fff" stroke="#4a7fd0" stroke-width=".7" opacity=".8"/></svg>
<svg style="left:837px;top:250px" width="17" height="17" viewBox="0 0 17 17"><defs><linearGradient id="paste-gc" x1="0" y1="0" x2="1" y2="0"><stop offset="0" stop-color="#9a9a9a"/><stop offset="1" stop-color="#d4d4d4"/></linearGradient><linearGradient id="paste-gpp" x1="0" y1="0" x2="1" y2="1"><stop offset="0" stop-color="#f4f4f4"/><stop offset="1" stop-color="#d2d2d2"/></linearGradient></defs><rect x=".8" y="1.6" width="11" height="13.4" rx=".8" fill="url(#paste-gc)" stroke="#5d5d5d" stroke-width="1.1"/><path d="M3.8,2.6 v-1.4 a.8,.8 0 0 1 .8,-.8 h3.4 a.8,.8 0 0 1 .8,.8 v1.4 z" fill="#e6e6e6" stroke="#5d5d5d" stroke-width=".8"/><path d="M7.3,5 H13 L16,8 V15.7 a0.3,0.3 0 0 1 -0.3,0.3 H7.3 a0.3,0.3 0 0 1 -0.3,-0.3 V5.3 a0.3,0.3 0 0 1 0.3,-0.3 z" fill="url(#paste-gpp)" stroke="#6b6b6b" stroke-width="1" stroke-linejoin="round"/><path d="M13,5 V8 H16" fill="#fff" stroke="#6b6b6b" stroke-width=".7" opacity=".8"/></svg>
<svg style="left:837px;top:272px" width="17" height="16" viewBox="0 0 17 16"><defs><linearGradient id="edit-gb" x1="0" y1="0" x2="1" y2="1"><stop offset="0" stop-color="#eeeeee"/><stop offset="1" stop-color="#d6d6d6"/></linearGradient></defs><g opacity="1"><path d="M1.5,1.5 h14.4 v10.5 h-4.9 l-4,3.2 v-3.2 h-5.5 z" fill="#000" opacity=".10"/><path d="M1.7,0.5 h12.0 a1.2,1.2 0 0 1 1.2,1.2 v8.1 a1.2,1.2 0 0 1 -1.2,1.2 h-3.200000000000001 l-4,3 v-3 h-5.6 a1.2,1.2 0 0 1 -1.2,-1.2 v-8.1 a1.2,1.2 0 0 1 1.2,-1.2 z" fill="url(#edit-gb)"/><rect x="2.0" y="4.0" width="11.4" height="1" fill="#bcbcbc"/><rect x="2.0" y="6.0" width="11.4" height="1" fill="#bcbcbc"/><rect x="2.0" y="8.0" width="11.4" height="1" fill="#bcbcbc"/></g><g transform="translate(4.6,15.2) rotate(-41)"><path d="M0,0 l3,-1.9 h10.5 a1,1 0 0 1 1,1 v1.8 a1,1 0 0 1 -1,1 h-10.5 z" fill="#f7d64a" stroke="#c98a1c" stroke-width=".9" stroke-linejoin="round"/><path d="M3,-1 h9.5" stroke="#fdf0a8" stroke-width="1"/><path d="M0,0 l3,-1.9 v3.8 z" fill="#e9b676" stroke="#b86a18" stroke-width=".6"/><path d="M0,0 l1.2,-.75 v1.5 z" fill="#5a3a10"/><rect x="12" y="-1.9" width="2.4" height="3.8" fill="#f6e9e0" stroke="#c98a1c" stroke-width=".6"/></g></svg>
<svg style="left:837px;top:294px" width="17" height="16" viewBox="0 0 17 16"><defs><linearGradient id="remove-gb" x1="0" y1="0" x2="1" y2="1"><stop offset="0" stop-color="#eeeeee"/><stop offset="1" stop-color="#d6d6d6"/></linearGradient></defs><g opacity="1"><path d="M1.5,1.5 h14.4 v10.5 h-4.9 l-4,3.2 v-3.2 h-5.5 z" fill="#000" opacity=".10"/><path d="M1.7,0.5 h12.0 a1.2,1.2 0 0 1 1.2,1.2 v8.1 a1.2,1.2 0 0 1 -1.2,1.2 h-3.200000000000001 l-4,3 v-3 h-5.6 a1.2,1.2 0 0 1 -1.2,-1.2 v-8.1 a1.2,1.2 0 0 1 1.2,-1.2 z" fill="url(#remove-gb)"/><rect x="2.0" y="4.0" width="11.4" height="1" fill="#bcbcbc"/><rect x="2.0" y="6.0" width="11.4" height="1" fill="#bcbcbc"/><rect x="2.0" y="8.0" width="11.4" height="1" fill="#bcbcbc"/></g><circle cx="12.5" cy="12.5" r="3.1" fill="#e8731a" stroke="#c85a08" stroke-width="1"/><path d="M11,11 l3,3 M14,11 l-3,3" stroke="#fff" stroke-width="1.2"/></svg>
<svg style="left:837px;top:338px" width="16" height="16" viewBox="0 0 16 16"><defs><linearGradient id="resolve-gb" x1="0" y1="0" x2="1" y2="1"><stop offset="0" stop-color="#eeeeee"/><stop offset="1" stop-color="#d6d6d6"/></linearGradient></defs><g opacity="1"><path d="M1.5,1.5 h14.4 v10.5 h-4.9 l-4,3.2 v-3.2 h-5.5 z" fill="#000" opacity=".10"/><path d="M1.7,0.5 h12.0 a1.2,1.2 0 0 1 1.2,1.2 v8.1 a1.2,1.2 0 0 1 -1.2,1.2 h-3.200000000000001 l-4,3 v-3 h-5.6 a1.2,1.2 0 0 1 -1.2,-1.2 v-8.1 a1.2,1.2 0 0 1 1.2,-1.2 z" fill="url(#resolve-gb)"/></g><rect x="9" y="3.7" width="4.5" height="1" fill="#b4b4b4"/><rect x="9" y="5.8" width="4.5" height="1" fill="#b4b4b4"/><rect x="2.5" y="8" width="11" height="1" fill="#b4b4b4"/><rect x="1.2" y="1.2" width="6.8" height="5.6" rx="1.2" fill="#4f4f4f"/><path d="M2.6,4 l1.5,1.5 l2.7,-3" fill="none" stroke="#fff" stroke-width="1.2"/></svg>
<svg style="left:837px;top:360px" width="17" height="16" viewBox="0 0 17 16"><defs><linearGradient id="refresh-gb" x1="0" y1="0" x2="1" y2="1"><stop offset="0" stop-color="#eeeeee"/><stop offset="1" stop-color="#d6d6d6"/></linearGradient></defs><g opacity="1"><path d="M1.5,1.5 h14.4 v10.5 h-4.9 l-4,3.2 v-3.2 h-5.5 z" fill="#000" opacity=".10"/><path d="M1.7,0.5 h12.0 a1.2,1.2 0 0 1 1.2,1.2 v8.1 a1.2,1.2 0 0 1 -1.2,1.2 h-3.200000000000001 l-4,3 v-3 h-5.6 a1.2,1.2 0 0 1 -1.2,-1.2 v-8.1 a1.2,1.2 0 0 1 1.2,-1.2 z" fill="url(#refresh-gb)"/><rect x="2.0" y="4.0" width="11.4" height="1" fill="#bcbcbc"/><rect x="2.0" y="6.0" width="11.4" height="1" fill="#bcbcbc"/><rect x="2.0" y="8.0" width="11.4" height="1" fill="#bcbcbc"/></g><rect x="9.3" y="11" width="1.9" height="4.6" fill="#e0444c"/><rect x="11.7" y="9.2" width="1.9" height="6.4" fill="#4a7ae0"/><rect x="14.1" y="12.4" width="1.9" height="3.2" fill="#4fa64a"/></svg>
<svg style="left:837px;top:382px" width="17" height="17" viewBox="0 0 17 17"><rect x="1" y="1.4" width="14" height="14.2" rx=".8" fill="#fff" stroke="#b9b9b9" stroke-width=".8"/><rect x="1" y="14.4" width="14" height="1.3" fill="#9a9a9a"/><path d="M1,1.8 a.8,.8 0 0 1 .8,-.8 h12.4 a.8,.8 0 0 1 .8,.8 v4.4 h-14 z" fill="#e0202a"/><rect x="3.4" y="0" width="2.2" height="4" rx=".8" fill="#d9d9d9" stroke="#9b9b9b" stroke-width=".5"/><rect x="10.5" y="0" width="2.2" height="4" rx=".8" fill="#d9d9d9" stroke="#9b9b9b" stroke-width=".5"/><text x="7.3" y="12.6" font-family="Liberation Sans, sans-serif" font-size="6.6" text-anchor="middle" fill="#8a8a8a">17</text><path d="M11,9 L16,12.4 L11,15.8 Z" fill="#3f74d4" stroke="#2f5fb8" stroke-width=".5"/></svg>
<svg style="left:837px;top:404px" width="17" height="16" viewBox="0 0 17 16"><defs><radialGradient id="eye-ge"><stop offset="0" stop-color="#5a84d8"/><stop offset="1" stop-color="#8cacec"/></radialGradient></defs><ellipse cx="8.2" cy="8" rx="7.5" ry="5.3" fill="#fff" stroke="#e6ae84" stroke-width="1.3"/><path d="M1.4,7 Q8.2,-.2 15,7" fill="none" stroke="#dc9a68" stroke-width=".8"/><circle cx="8.2" cy="7.4" r="3.7" fill="url(#eye-ge)"/><rect x="7.1" y="6.2" width="2.2" height="2.2" fill="#000"/></svg>
<svg style="left:837px;top:426px" width="17" height="17" viewBox="0 0 17 17"><defs><linearGradient id="sendmail-ga" x1="0" y1="0" x2="0" y2="1"><stop offset="0" stop-color="#a2d482"/><stop offset="1" stop-color="#62a83a"/></linearGradient></defs><g opacity="1"><rect x="0.6" y="2.4" width="15" height="10.4" fill="#e3edfc" stroke="#4a7fd0" stroke-width="1"/><path d="M1.4,3.2 L8.1,8.848 L14.799999999999999,3.2" fill="#f4f8ff" stroke="#9fbdea" stroke-width=".9"/><path d="M1.4,12.0 L5.999999999999999,7.08 M14.799999999999999,12.0 L10.2,7.08" stroke="#b7cdf0" stroke-width=".8"/></g><path d="M6.5,10.3 h4.6 v-2.6 l4.6,4.3 l-4.6,4.3 v-2.6 h-4.6 z" fill="url(#sendmail-ga)" stroke="#2e7d12" stroke-width="1" stroke-linejoin="round"/><path d="M7.6,11.4 h4.6 v-1.3" fill="none" stroke="#b9e39a" stroke-width=".8" opacity=".9"/></svg>
<svg style="left:837px;top:448px" width="17" height="17" viewBox="0 0 17 17"><defs><linearGradient id="mktemplate-gp" x1="0" y1="0" x2="1" y2="1"><stop offset="0" stop-color="#eef4fd"/><stop offset="1" stop-color="#bcd4f4"/></linearGradient><linearGradient id="mktemplate-ga" x1="0" y1="0" x2="0" y2="1"><stop offset="0" stop-color="#a2d482"/><stop offset="1" stop-color="#62a83a"/></linearGradient><linearGradient id="mktemplate-gg" x1="0" y1="0" x2="0" y2="1"><stop offset="0" stop-color="#e4e4e4"/><stop offset="1" stop-color="#c4c4c4"/></linearGradient></defs><path d="M3.4,0.6 H12.3 L15.8,4.1 V14.6 a1,1 0 0 1 -1,1 H3.4 a1,1 0 0 1 -1,-1 V1.6 a1,1 0 0 1 1,-1 z" fill="url(#mktemplate-gp)" stroke="#4a7fd0" stroke-width="1" stroke-linejoin="round"/><path d="M12.3,0.6 V4.1 H15.8" fill="#fff" stroke="#4a7fd0" stroke-width=".7" opacity=".8"/><rect x=".5" y="4.5" width="10.4" height="7" rx="1" fill="url(#mktemplate-gg)" stroke="#b5b5b5" stroke-width=".5"/><path d="M6.5,10.2 h4.6 v-2.6 l4.6,4.3 l-4.6,4.3 v-2.6 h-4.6 z" fill="url(#mktemplate-ga)" stroke="#2e7d12" stroke-width="1" stroke-linejoin="round"/><path d="M7.6,11.3 h4.6 v-1.3" fill="none" stroke="#b9e39a" stroke-width=".8" opacity=".9"/></svg>
<svg style="left:837px;top:477px" width="16" height="17" viewBox="0 0 16 17"><defs><linearGradient id="tv-gtv" x1="0" y1="0" x2="1" y2="1"><stop offset="0" stop-color="#8cc6f8"/><stop offset="1" stop-color="#5ea6ee"/></linearGradient></defs><path d="M2.2,.3 L7,4.4 M13.6,.3 L8.8,4.4" stroke="#56709e" stroke-width="1.3"/><rect x="1" y="4" width="14" height="12" rx=".8" fill="#262626"/><rect x="2" y="5" width="12" height="8.2" fill="url(#tv-gtv)"/><path d="M2,5 h6 l-6,5 z" fill="#fff" opacity=".18"/><rect x="2" y="13.4" width="12" height="1.3" fill="#555"/><rect x="3.6" y="13.3" width="1.6" height="1.4" fill="#e02020"/></svg>
<svg style="left:841px;top:320px" width="8" height="8" viewBox="0 0 8 8"><rect x="1.75" y="1.75" width="4.5" height="4.5" rx="1.4" fill="#f49a9c" stroke="#dc0a18" stroke-width="1.5"/></svg>
<div class="t" style="left:833.0px;top:86px;letter-spacing:-0.42px;font-weight:bold;">Actions</div>
<div class="t" style="left:859.4px;top:113px;letter-spacing:-0.07px;color:#3399ff;">Publish...</div>
<div class="t" style="left:859.2px;top:135px;letter-spacing:0.10px;color:#3399ff;">Add</div>
<div class="t" style="left:883.4px;top:135px;letter-spacing:0.15px;color:#3399ff;">new</div>
<div class="t" style="left:908.2px;top:135px;letter-spacing:-0.40px;color:#3399ff;">message...</div>
<div class="t" style="left:859.2px;top:157px;letter-spacing:0.10px;color:#3399ff;">Add</div>
<div class="t" style="left:883.4px;top:157px;letter-spacing:0.15px;color:#3399ff;">new</div>
<div class="t" style="left:908.2px;top:157px;letter-spacing:-0.48px;color:#3399ff;">message</div>
<div class="t" style="left:955.5px;top:157px;letter-spacing:0.35px;color:#3399ff;">from</div>
<div class="t" style="left:982.0px;top:157px;letter-spacing:0.05px;color:#3399ff;">template...</div>
<div class="t" style="left:859.4px;top:179px;letter-spacing:-0.29px;color:#3399ff;">Export</div>
<div class="t" style="left:895.1px;top:179px;letter-spacing:-0.45px;color:#3399ff;">messages...</div>
<div class="t" style="left:859.5px;top:208px;letter-spacing:-0.11px;color:#3399ff;">Cut</div>
<div class="t" style="left:859.5px;top:230px;letter-spacing:-0.33px;color:#3399ff;">Copy</div>
<div class="t" style="left:859.4px;top:252px;letter-spacing:-0.62px;color:#404040;">Paste</div>
<div class="t" style="left:859.4px;top:274px;letter-spacing:-0.07px;color:#3399ff;">Edit...</div>
<div class="t" style="left:859.4px;top:296px;letter-spacing:-0.55px;color:#3399ff;">Remove</div>
<div class="t" style="left:859.4px;top:318px;letter-spacing:-0.06px;color:#3399ff;">Disable</div>
<div class="t" style="left:859.4px;top:340px;letter-spacing:-0.51px;color:#404040;">Resolve</div>
<div class="t" style="left:901.5px;top:340px;letter-spacing:0.29px;color:#404040;">now...</div>
<div class="t" style="left:859.4px;top:362px;letter-spacing:-0.21px;color:#3399ff;">Refresh</div>
<div class="t" style="left:901.5px;top:362px;letter-spacing:-0.10px;color:#3399ff;">"Viewed"...</div>
<div class="t" style="left:859.4px;top:384px;letter-spacing:0.01px;color:#3399ff;">Shift</div>
<div class="t" style="left:886.8px;top:384px;letter-spacing:-0.11px;color:#3399ff;">start</div>
<div class="t" style="left:912.0px;top:384px;letter-spacing:-0.05px;color:#3399ff;">time...</div>
<div class="t" style="left:859.4px;top:406px;letter-spacing:-0.38px;color:#3399ff;">Preview</div>
<div class="t" style="left:859.4px;top:428px;letter-spacing:-0.54px;color:#3399ff;">Send</div>
<div class="t" style="left:888.5px;top:428px;letter-spacing:-1.85px;color:#3399ff;">as</div>
<div class="t" style="left:902.6px;top:428px;letter-spacing:-0.19px;color:#3399ff;">e-mail...</div>
<div class="t" style="left:859.5px;top:450px;letter-spacing:-0.26px;color:#3399ff;">Create</div>
<div class="t" style="left:895.1px;top:450px;color:#3399ff;">template...</div>
<div class="t" style="left:859.4px;top:479px;letter-spacing:0.27px;color:#3399ff;">Watch</div>
<div class="t" style="left:895.1px;top:479px;letter-spacing:0.44px;color:#3399ff;">the</div>
<div class="t" style="left:915.2px;top:479px;letter-spacing:0.22px;color:#3399ff;">video-tutorial...</div>
</aside>
<aside class="g" id="information">
<div style="left:830px;top:567px;width:254px;height:4px;background:#f5f5f5"></div>
<div class="hdr" style="left:830px;top:571px;width:254px;height:23px"></div>
<div style="left:830px;top:594px;width:254px;height:185px;background:#ffffe1"></div>
<svg style="left:837px;top:602px" width="16" height="16" viewBox="0 0 16 16"><defs><linearGradient id="info-gi" x1="0" y1="0" x2="0" y2="1"><stop offset="0" stop-color="#8fb1e4"/><stop offset="1" stop-color="#4f7fc8"/></linearGradient></defs><circle cx="8" cy="8" r="6.6" fill="url(#info-gi)" stroke="#3c68b4" stroke-width="1.1"/><circle cx="8" cy="8" r="5.5" fill="none" stroke="#a9c4ea" stroke-width=".8"/><circle cx="7.9" cy="5.2" r="1.05" fill="#fff"/><path d="M6.6,7.2 h2.2 v3.6 h.9 v1 h-3.3 v-1 h.9 v-2.6 h-.7 z" fill="#fff"/></svg>
<svg style="left:952px;top:569px" width="10" height="2" viewBox="0 0 10 2"><rect x="0" y="0" width="2" height="1.4" fill="#7a7a7a"/><rect x="4" y="0" width="2" height="1.4" fill="#7a7a7a"/><rect x="8" y="0" width="2" height="1.4" fill="#7a7a7a"/></svg>
<div class="t" style="left:833.0px;top:576px;letter-spacing:-0.09px;font-weight:bold;">Information</div>
<div class="t" style="left:856.9px;top:604px;letter-spacing:-0.26px;font-size:12px;">The message group</div>
<div class="t ul" style="left:962.2px;top:604px;letter-spacing:-0.06px;font-size:12px;color:#3399ff;">Default</div>
<div class="t" style="left:1003.0px;top:604px;letter-spacing:-0.09px;font-size:12px;">contains</div>
<div class="t" style="left:857.4px;top:619px;letter-spacing:-0.18px;font-size:12px;">unpublished changes.</div>
</aside>
<footer class="g" id="statusbar">
<svg style="left:1071px;top:788px" width="13" height="13" viewBox="0 0 13 13"><rect x="10" y="2" width="2" height="2" fill="#fff"/><rect x="9" y="1" width="2" height="2" fill="#8c8c8c"/><rect x="6" y="6" width="2" height="2" fill="#fff"/><rect x="5" y="5" width="2" height="2" fill="#8c8c8c"/><rect x="10" y="6" width="2" height="2" fill="#fff"/><rect x="9" y="5" width="2" height="2" fill="#8c8c8c"/><rect x="2" y="10" width="2" height="2" fill="#fff"/><rect x="1" y="9" width="2" height="2" fill="#8c8c8c"/><rect x="6" y="10" width="2" height="2" fill="#fff"/><rect x="5" y="9" width="2" height="2" fill="#8c8c8c"/><rect x="10" y="10" width="2" height="2" fill="#fff"/><rect x="9" y="9" width="2" height="2" fill="#8c8c8c"/></svg>
</footer>
<div class="win"></div>
</body></html>
